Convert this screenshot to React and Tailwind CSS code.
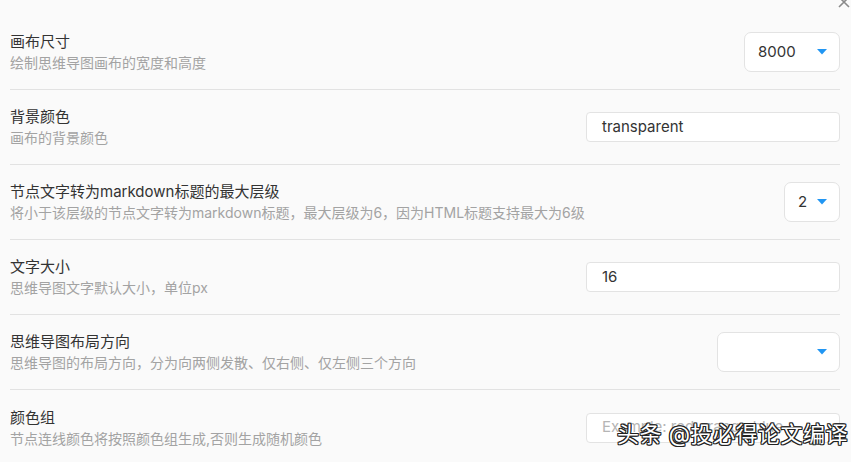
import React from "react";

const rows = [
  { title: "画布尺寸", desc: "绘制思维导图画布的宽度和高度", control: { type: "select", value: "8000", width: "w-[96px]" } },
  { title: "背景颜色", desc: "画布的背景颜色", control: { type: "input", value: "transparent" } },
  {
    title: "节点文字转为markdown标题的最大层级",
    desc: "将小于该层级的节点文字转为markdown标题，最大层级为6，因为HTML标题支持最大为6级",
    control: { type: "select", value: "2", width: "w-[56px]" },
  },
  { title: "文字大小", desc: "思维导图文字默认大小，单位px", control: { type: "input", value: "16" } },
  {
    title: "思维导图布局方向",
    desc: "思维导图的布局方向，分为向两侧发散、仅右侧、仅左侧三个方向",
    control: { type: "select", value: "", width: "w-[123px]" },
  },
  {
    title: "颜色组",
    desc: "节点连线颜色将按照颜色组生成,否则生成随机颜色",
    control: { type: "input", value: "", placeholder: "Example: red,orange,blue" },
  },
];

const Caret = () => (
  <svg width="10" height="6" viewBox="0 0 10 6" className="shrink-0">
    <path d="M0 0 L10 0 L5 5.5 Z" fill="#2196f3" />
  </svg>
);

const Control = ({ c }) => {
  if (c.type === "select") {
    return (
      <div
        className={`${c.width} h-[40px] bg-white border border-[#e3e3e3] rounded-[7px] flex items-center justify-between pl-[13px] pr-[12px] text-[15px] text-[#333]`}
      >
        <span>{c.value}</span>
        <Caret />
      </div>
    );
  }
  return (
    <div className="w-[254px] h-[30px] bg-white border border-[#e3e3e3] rounded-[4px] flex items-center pl-[15px] text-[15px]">
      {c.value ? (
        <span className="text-[#333]">{c.value}</span>
      ) : (
        <span className="text-[#b5b5b5]">{c.placeholder}</span>
      )}
    </div>
  );
};

export default function App() {
  return (
    <div
      className="relative w-[851px] h-[462px] overflow-hidden bg-[#fafafa]"
      style={{ fontFamily: 'Inter, "Noto Sans CJK SC", sans-serif' }}
    >
      {/* close button, mostly cut off */}
      <svg width="14" height="14" viewBox="0 0 14 14" className="absolute right-[0px] top-[-5px]">
        <path d="M2 2 L12 12 M12 2 L2 12" stroke="#8a8a8a" strokeWidth="1.6" />
      </svg>

      <div className="pt-[15px] pl-[10px] pr-[11px]">
        {rows.map((r, i) => (
          <div
            key={i}
            className={`h-[75px] flex items-center justify-between ${i < rows.length - 1 ? "border-b border-[#e2e2e2]" : ""}`}
          >
            <div className="flex flex-col">
              <span className="text-[15px] leading-[22px] text-[#333]">{r.title}</span>
              <span className="text-[14px] leading-[20px] text-[#a3a3a3]">{r.desc}</span>
            </div>
            <Control c={r.control} />
          </div>
        ))}
      </div>

      {/* watermark */}
      <div
        className="absolute left-[617px] top-[419px] text-[22px] leading-[30px] text-white tracking-[0.5px]"
        style={{ textShadow: "1px 1px 0 #222, -1px -1px 0 #222, 1px -1px 0 #222, -1px 1px 0 #222, 0 1px 0 #222, 0 -1px 0 #222, 1px 0 0 #222, -1px 0 0 #222" }}
      >
        头条 @投必得论文编译
      </div>
    </div>
  );
}
